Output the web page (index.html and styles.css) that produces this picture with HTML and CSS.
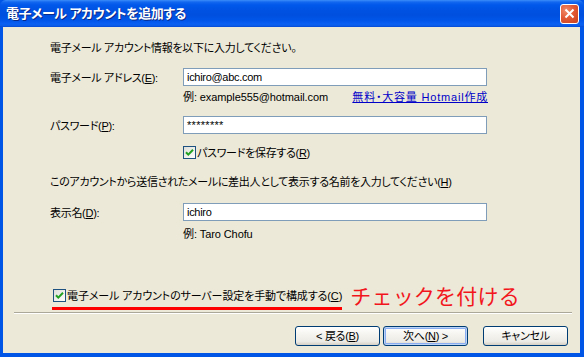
FILE: index.html
```html
<!DOCTYPE html>
<html lang="ja">
<head>
<meta charset="utf-8">
<title>電子メール アカウントを追加する</title>
<link rel="stylesheet" href="styles.css">
</head>
<body>
<div class="page">
  <div class="window">
    <div class="titlebar">
      <span class="title">電子メール アカウントを追加する</span>
      <span class="close">
        <svg width="11" height="11" viewBox="0 0 11 11"><path d="M1.5 1.5 L9.5 9.5 M9.5 1.5 L1.5 9.5" stroke="#fff" stroke-width="2" fill="none"/></svg>
      </span>
    </div>
    <div class="body">
      <p class="line intro">電子メール アカウント情報を以下に入力してください。</p>

      <div class="field r-email">
        <span class="lbl">電子メール アドレス(<u>E</u>):</span>
        <div class="textbox">ichiro@abc.com</div>
      </div>
      <div class="sub r-ex1">
        <span class="hint">例: example555@hotmail.com</span>
        <a class="link" href="#">無料・大容量 Hotmail作成</a>
      </div>

      <div class="field r-pw">
        <span class="lbl">パスワード(<u>P</u>):</span>
        <div class="textbox pw">********</div>
      </div>
      <div class="sub r-save">
        <span class="check">
          <svg width="13" height="13" viewBox="0 0 13 13"><defs><linearGradient id="cb1" x1="0" y1="0" x2="1" y2="1"><stop offset="0" stop-color="#dcdcd7"/><stop offset="1" stop-color="#ffffff"/></linearGradient></defs><rect x="0.5" y="0.5" width="12" height="12" fill="url(#cb1)" stroke="#1c5180"/><path d="M3 6.2 L5.3 8.6 L10 3.8" stroke="#21a121" stroke-width="2" fill="none"/></svg>
        </span>
        <span class="cblabel">パスワードを保存する(<u>R</u>)</span>
      </div>

      <p class="line r-instr">このアカウントから送信されたメールに差出人として表示する名前を入力してください(<u>H</u>)</p>

      <div class="field r-name">
        <span class="lbl">表示名(<u>D</u>):</span>
        <div class="textbox">ichiro</div>
      </div>
      <div class="sub r-ex2">
        <span class="hint">例: Taro Chofu</span>
      </div>

      <div class="manual">
        <span class="marked">
          <span class="check">
            <svg width="13" height="13" viewBox="0 0 13 13"><defs><linearGradient id="cb2" x1="0" y1="0" x2="1" y2="1"><stop offset="0" stop-color="#dcdcd7"/><stop offset="1" stop-color="#ffffff"/></linearGradient></defs><rect x="0.5" y="0.5" width="12" height="12" fill="url(#cb2)" stroke="#1c5180"/><path d="M3 6.2 L5.3 8.6 L10 3.8" stroke="#21a121" stroke-width="2" fill="none"/></svg>
          </span>
          <span class="cblabel">電子メール アカウントのサーバー設定を手動で構成する(<u>C</u>)</span>
        </span>
        <span class="note">チェックを付ける</span>
      </div>

      <div class="separator"></div>

      <div class="buttons">
        <button class="btn" type="button">&lt; 戻る(<u>B</u>)</button>
        <button class="btn default" type="button">次へ(<u>N</u>) &gt;</button>
        <button class="btn cancel" type="button">キャンセル</button>
      </div>
    </div>
  </div>
</div>
</body>
</html>
```

FILE: styles.css
```css
* { box-sizing: border-box; }

html, body {
  margin: 0;
  padding: 0;
  background: #ffffff;
}

body {
  font-family: "Liberation Sans", "Noto Sans CJK JP", sans-serif;
  font-size: 11px;
  letter-spacing: -0.3px;
  color: #000;
  font-feature-settings: "palt";
}

.page {
  width: 586px;
  height: 357px;
  display: flex;
}

.window {
  width: 584px;
  height: 357px;
  display: flex;
  flex-direction: column;
  background: #0055e6;
}

.titlebar {
  height: 27px;
  flex: none;
  display: flex;
  align-items: center;
  justify-content: space-between;
  padding: 0 5px 0 6px;
  background: linear-gradient(to bottom,
    #3c8ef8 0px, #1468f0 2px, #0058ea 5px, #0052e3 10px,
    #004fdf 15px, #0055e8 20px, #0a60f2 24px, #0b5ae6 26px, #0045d2 27px);
  border-radius: 6px 6px 0 0;
}

.title {
  color: #fff;
  font-weight: bold;
  font-size: 13px;
  letter-spacing: -0.5px;
  line-height: 16px;
  text-shadow: 1px 1px 0 #0a2a8a;
  margin-top: 1px;
}

.close {
  width: 19px;
  height: 20px;
  border: 1px solid #fff;
  border-radius: 3px;
  background: radial-gradient(circle at 30% 30%, #f08a6a 0%, #e25a35 45%, #c8401c 100%);
  display: flex;
  align-items: center;
  justify-content: center;
}

.close svg { display: block; }

.body {
  flex: 1;
  margin: 0 4px 4px 3px;
  background: #ece9d8;
  display: flex;
  flex-direction: column;
  padding-left: 47px;
}

.line {
  margin: 0;
  height: 16px;
  line-height: 16px;
  white-space: nowrap;
}

.intro { margin-top: 13px; }

.field {
  display: flex;
  align-items: center;
  height: 18px;
}

.lbl {
  width: 133px;
  flex: none;
  white-space: nowrap;
}

.textbox {
  width: 304px;
  height: 18px;
  border: 1px solid #7f9db9;
  background: #fff;
  padding-left: 3px;
  line-height: 16px;
}

.textbox.pw { letter-spacing: 0.3px; }

.sub {
  display: flex;
  align-items: center;
  height: 16px;
  margin-left: 133px;
  width: 305px;
  justify-content: space-between;
  white-space: nowrap;
}

.hint { letter-spacing: -0.1px; }

.link {
  color: #0000c8;
  text-decoration: underline;
  letter-spacing: 0.8px;
}

.r-email { margin-top: 12px; }
.r-ex1 { margin-top: 2px; }
.r-pw { margin-top: 12px; }
.r-save { margin-top: 10px; justify-content: flex-start; }
.r-instr { margin-top: 14px; }
.r-name { margin-top: 13px; }
.r-ex2 { margin-top: 4px; justify-content: flex-start; }

.check {
  width: 13px;
  height: 13px;
  flex: none;
  display: block;
}

.check svg { display: block; }

.r-save .cblabel { margin-left: 1px; }

.manual {
  margin-top: 45px;
  height: 24px;
  display: flex;
  align-items: flex-start;
}

.marked {
  margin-left: 2px;
  display: flex;
  align-items: center;
  height: 24px;
  padding-bottom: 3px;
  border-bottom: 3px solid #ff0000;
  white-space: nowrap;
}

.marked .check { margin-left: 1px; }
.marked .cblabel { margin-left: 1px; letter-spacing: -0.12px; }

.note {
  margin-left: 8px;
  margin-top: -4px;
  color: #f2161c;
  font-family: "Noto Sans CJK JP", sans-serif;
  font-feature-settings: normal;
  letter-spacing: 0.2px;
  font-size: 21px;
  line-height: 26px;
  white-space: nowrap;
}

.separator {
  margin-top: 2px;
  margin-left: -36px;
  margin-right: 8px;
  height: 2px;
  border-top: 1px solid #aca899;
  border-bottom: 1px solid #ffffff;
}

.buttons {
  margin-top: 12px;
  display: flex;
  justify-content: flex-end;
  padding-right: 12px;
}

.btn {
  width: 85px;
  height: 20px;
  margin: 0;
  padding: 0;
  border: 1px solid #003c74;
  border-radius: 3px;
  background: linear-gradient(to bottom, #ffffff 0%, #f4f3ee 45%, #ecebe6 80%, #d6d0c5 100%);
  font-family: "Liberation Sans", "Noto Sans CJK JP", sans-serif;
  font-size: 11px;
  letter-spacing: -0.3px;
  font-feature-settings: "palt";
  color: #000;
  line-height: 16px;
}

.btn.default {
  margin-left: 3px;
  box-shadow: inset 0 0 0 1px #bcd4f6, inset 0 0 0 2px #89adf0;
}

.btn.cancel { margin-left: 15px; }
```
